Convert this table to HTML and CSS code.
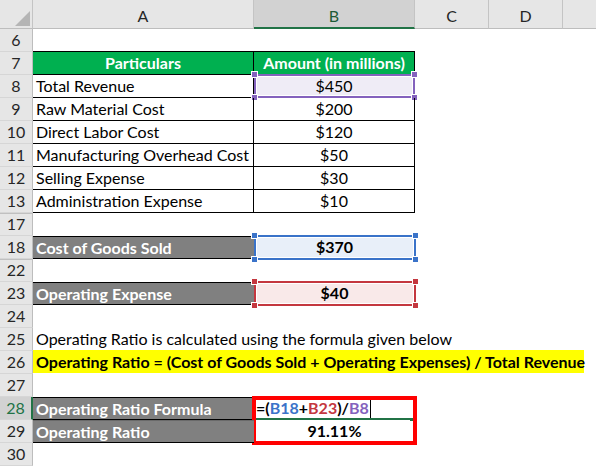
FILE: index.html
```html
<!DOCTYPE html>
<html>
<head>
<meta charset="utf-8">
<link rel="stylesheet" href="styles.css">
</head>
<body>
<div class="sheet">
  <div class="ch corner"><svg width="32" height="28" viewBox="0 0 32 28"><polygon points="15,26 30,26 30,11" fill="#b5b5b5"/></svg></div>
  <div class="ch">A</div>
  <div class="ch sel">B</div>
  <div class="ch">C</div>
  <div class="ch">D</div>
  <div class="ch last"></div>

  <div class="rh">6</div>
  <div class="c topline"></div><div class="c topline"></div><div class="c"></div><div class="c"></div><div class="c"></div>

  <div class="rh">7</div>
  <div class="c t th">Particulars</div><div class="c t th">Amount (in millions)</div><div class="c"></div><div class="c"></div><div class="c"></div>

  <div class="rh">8</div>
  <div class="c t">Total Revenue</div>
  <div class="c t num hl purple">$450<i class="h tl"></i><i class="h tr"></i><i class="h bl"></i><i class="h br"></i></div>
  <div class="c"></div><div class="c"></div><div class="c"></div>

  <div class="rh">9</div>
  <div class="c t">Raw Material Cost</div><div class="c t num">$200</div><div class="c"></div><div class="c"></div><div class="c"></div>

  <div class="rh">10</div>
  <div class="c t">Direct Labor Cost</div><div class="c t num">$120</div><div class="c"></div><div class="c"></div><div class="c"></div>

  <div class="rh">11</div>
  <div class="c t">Manufacturing Overhead Cost</div><div class="c t num">$50</div><div class="c"></div><div class="c"></div><div class="c"></div>

  <div class="rh">12</div>
  <div class="c t">Selling Expense</div><div class="c t num">$30</div><div class="c"></div><div class="c"></div><div class="c"></div>

  <div class="rh">13</div>
  <div class="c t">Administration Expense</div><div class="c t num">$10</div><div class="c"></div><div class="c"></div><div class="c"></div>

  <div class="rh hid">17</div>
  <div class="c"></div><div class="c"></div><div class="c"></div><div class="c"></div><div class="c"></div>

  <div class="rh">18</div>
  <div class="c grey">Cost of Goods Sold</div>
  <div class="c num bold hl blue">$370<i class="h tl"></i><i class="h tr"></i><i class="h bl"></i><i class="h br"></i></div>
  <div class="c"></div><div class="c"></div><div class="c"></div>

  <div class="rh hid">22</div>
  <div class="c"></div><div class="c"></div><div class="c"></div><div class="c"></div><div class="c"></div>

  <div class="rh">23</div>
  <div class="c grey">Operating Expense</div>
  <div class="c num bold hl red">$40<i class="h tl"></i><i class="h tr"></i><i class="h bl"></i><i class="h br"></i></div>
  <div class="c"></div><div class="c"></div><div class="c"></div>

  <div class="rh">24</div>
  <div class="c"></div><div class="c"></div><div class="c"></div><div class="c"></div><div class="c"></div>

  <div class="rh">25</div>
  <div class="c span">Operating Ratio is calculated using the formula given below</div>

  <div class="rh">26</div>
  <div class="c span"><span class="yellow">Operating Ratio = (Cost of Goods Sold + Operating Expenses) / Total Revenue</span></div>

  <div class="rh">27</div>
  <div class="c"></div><div class="c"></div><div class="c"></div><div class="c"></div><div class="c"></div>

  <div class="rh act">28</div>
  <div class="c grey">Operating Ratio Formula</div>
  <div class="c formula"><span>=(</span><span class="fb">B18</span><span>+</span><span class="fr">B23</span><span>)/</span><span class="fp">B8</span><span class="cursor"></span><i class="redbox"></i><i class="sq"></i></div>
  <div class="c"></div><div class="c"></div><div class="c"></div>

  <div class="rh">29</div>
  <div class="c grey last">Operating Ratio</div>
  <div class="c num bold">91.11%</div>
  <div class="c"></div><div class="c"></div><div class="c"></div>

  <div class="rh">30</div>
  <div class="c"></div><div class="c"></div><div class="c"></div><div class="c"></div><div class="c"></div>
</div>
</body>
</html>
```
FILE: styles.css
```css
* { box-sizing: border-box; }
body {
  margin: 0;
  background: #fff;
  font-family: Lato, "Liberation Sans", sans-serif;
  font-size: 16px;
  color: #000;
}
.sheet {
  display: grid;
  grid-template-columns: 33px 221px 161px 74px 74px 33px;
  grid-template-rows: 29px;
  grid-auto-rows: 23px;
  width: 596px;
  height: 466px;
  overflow: hidden;
}
.ch {
  background: #e6e6e6;
  border-right: 1px solid #c4c4c4;
  border-bottom: 1px solid #bdbdbd;
  text-align: center;
  padding-top: 5px;
  line-height: 22px;
  color: #262626;
}
.ch.corner { padding: 0; }
.ch.corner svg { display: block; }
.ch.sel {
  background: #d2d2d2;
  border-bottom: 2px solid #217346;
  color: #1e5b37;
}
.ch.last { border-right: none; }
.rh {
  background: #e6e6e6;
  border-right: 1px solid #bdbdbd;
  border-bottom: 1px solid #d6d6d6;
  text-align: center;
  line-height: 22px;
  color: #262626;
}
.rh.hid { border-top: 1px solid #c0c0c0; line-height: 20px; }
.rh.act {
  background: #d2d2d2;
  color: #217346;
  border-right: 2px solid #217346;
}
.c {
  line-height: 22px;
  padding: 0 3px;
  white-space: nowrap;
  position: relative;
}
.topline { border-bottom: 1px solid #000; }
.t {
  border-right: 1px solid #000;
  border-bottom: 1px solid #000;
}
.th {
  background: #00b050;
  color: #fff;
  font-weight: bold;
  text-align: center;
}
.num { text-align: center; }
.bold { font-weight: bold; }
.grey {
  background: #808080;
  color: #fff;
  font-weight: bold;
  border-top: 1px solid #000;
  border-bottom: 1px solid #000;
  line-height: 21px;
}
.grey.last { border-top: 1px solid #6a6a6a; }
.hl.purple { background: #efecf6; }
.hl.blue { background: #e8eff9; }
.hl.red { background: #f9e9e9; }
.hl::before {
  content: "";
  position: absolute;
  left: 0;
  top: -1px;
  right: -1px;
  bottom: -1px;
  border: 2px solid currentColor;
  box-shadow: inset 0 0 0 1px #fff;
}
.hl.purple::before { color: #8462bd; }
.hl.blue::before { color: #3a73c9; }
.hl.red::before { color: #c4373f; }
.h {
  position: absolute;
  width: 5px;
  height: 5px;
  outline: 1px solid #fff;
}
.purple .h { background: #8462bd; }
.blue .h { background: #3a73c9; }
.red .h { background: #c4373f; }
.h.tl { left: -2px; top: -3px; }
.h.tr { right: -3px; top: -3px; }
.h.bl { left: -2px; bottom: -3px; }
.h.br { right: -3px; bottom: -3px; }
.span {
  grid-column: 2 / -1;
  padding-left: 3px;
}
.yellow {
  display: inline-block;
  width: 551px;
  margin-left: -3px;
  padding-left: 3px;
  background: #ffff00;
  font-weight: bold;
  line-height: 23px;
  height: 23px;
  margin-top: -1px;
}
.formula {
  font-weight: bold;
  padding-left: 2px;
  border-bottom: 2px solid #217346;
  line-height: 21px;
}
.fb { color: #3a73c9; }
.fr { color: #c4373f; }
.fp { color: #8462bd; }
.cursor {
  display: inline-block;
  width: 1px;
  height: 18px;
  background: #000;
  vertical-align: -4px;
  margin-left: 1px;
}
.redbox {
  position: absolute;
  left: -2px;
  top: -1px;
  width: 165px;
  height: 49px;
  border: 4px solid #ff0000;
}
.sq {
  position: absolute;
  right: 2px;
  bottom: -3px;
  width: 3px;
  height: 3px;
  background: #217346;
}
```
